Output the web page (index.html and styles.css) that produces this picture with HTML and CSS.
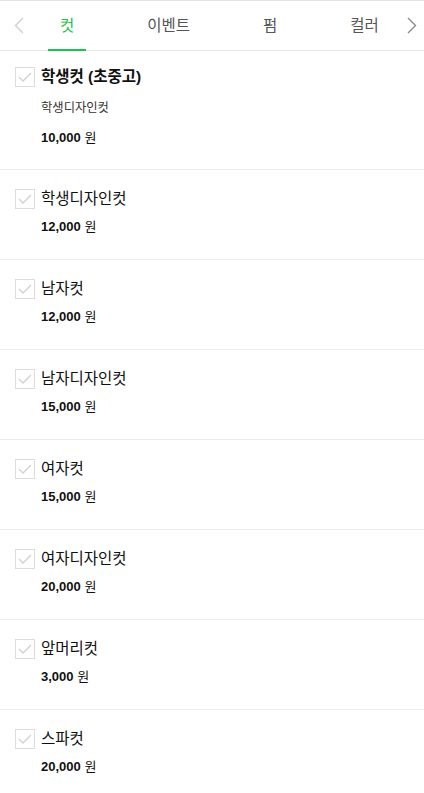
FILE: index.html
```html
<!DOCTYPE html>
<html lang="ko">
<head>
<meta charset="utf-8">
<title>메뉴</title>
<link rel="stylesheet" href="styles.css">
</head>
<body>
<nav class="tabs">
  <span class="arrow arrow-left">
    <svg width="10" height="17" viewBox="0 0 10 17"><path d="M9 1 L1.5 8.5 L9 16" fill="none" stroke="#cfcfcf" stroke-width="1.4"/></svg>
  </span>
  <ul class="tab-list">
    <li class="tab active"><span class="tab-inner">컷</span></li>
    <li class="tab"><span class="tab-inner">이벤트</span></li>
    <li class="tab"><span class="tab-inner">펌</span></li>
    <li class="tab"><span class="tab-inner">컬러</span></li>
  </ul>
  <span class="arrow arrow-right">
    <svg width="10" height="17" viewBox="0 0 10 17"><path d="M1 1 L8.5 8.5 L1 16" fill="none" stroke="#8a8a8a" stroke-width="1.4"/></svg>
  </span>
</nav>
<ul class="menu">
  <li class="item first">
    <span class="check"><svg width="14" height="10" viewBox="0 0 14 10"><path d="M1 5 L5 9 L13 1" fill="none" stroke="#d0d0d0" stroke-width="1.3"/></svg></span>
    <div class="info">
      <div class="title bold">학생컷 (초중고)</div>
      <div class="sub">학생디자인컷</div>
      <div class="price price-first"><b>10,000</b> 원</div>
    </div>
  </li>
  <li class="item">
    <span class="check"><svg width="14" height="10" viewBox="0 0 14 10"><path d="M1 5 L5 9 L13 1" fill="none" stroke="#d0d0d0" stroke-width="1.3"/></svg></span>
    <div class="info">
      <div class="title">학생디자인컷</div>
      <div class="price"><b>12,000</b> 원</div>
    </div>
  </li>
  <li class="item">
    <span class="check"><svg width="14" height="10" viewBox="0 0 14 10"><path d="M1 5 L5 9 L13 1" fill="none" stroke="#d0d0d0" stroke-width="1.3"/></svg></span>
    <div class="info">
      <div class="title">남자컷</div>
      <div class="price"><b>12,000</b> 원</div>
    </div>
  </li>
  <li class="item">
    <span class="check"><svg width="14" height="10" viewBox="0 0 14 10"><path d="M1 5 L5 9 L13 1" fill="none" stroke="#d0d0d0" stroke-width="1.3"/></svg></span>
    <div class="info">
      <div class="title">남자디자인컷</div>
      <div class="price"><b>15,000</b> 원</div>
    </div>
  </li>
  <li class="item">
    <span class="check"><svg width="14" height="10" viewBox="0 0 14 10"><path d="M1 5 L5 9 L13 1" fill="none" stroke="#d0d0d0" stroke-width="1.3"/></svg></span>
    <div class="info">
      <div class="title">여자컷</div>
      <div class="price"><b>15,000</b> 원</div>
    </div>
  </li>
  <li class="item">
    <span class="check"><svg width="14" height="10" viewBox="0 0 14 10"><path d="M1 5 L5 9 L13 1" fill="none" stroke="#d0d0d0" stroke-width="1.3"/></svg></span>
    <div class="info">
      <div class="title">여자디자인컷</div>
      <div class="price"><b>20,000</b> 원</div>
    </div>
  </li>
  <li class="item">
    <span class="check"><svg width="14" height="10" viewBox="0 0 14 10"><path d="M1 5 L5 9 L13 1" fill="none" stroke="#d0d0d0" stroke-width="1.3"/></svg></span>
    <div class="info">
      <div class="title">앞머리컷</div>
      <div class="price"><b>3,000</b> 원</div>
    </div>
  </li>
  <li class="item">
    <span class="check"><svg width="14" height="10" viewBox="0 0 14 10"><path d="M1 5 L5 9 L13 1" fill="none" stroke="#d0d0d0" stroke-width="1.3"/></svg></span>
    <div class="info">
      <div class="title">스파컷</div>
      <div class="price"><b>20,000</b> 원</div>
    </div>
  </li>
</ul>
</body>
</html>
```

FILE: styles.css
```css
* { box-sizing: border-box; }
html, body { margin: 0; padding: 0; background: #fff; }
body {
  font-family: "Liberation Sans", "Noto Sans CJK KR", sans-serif;
  color: #222;
  overflow: hidden;
}
ul { list-style: none; margin: 0; padding: 0; }

.tabs {
  display: flex;
  align-items: center;
  height: 51px;
  border-top: 1px solid #e6e6e6;
  border-bottom: 1px solid #e6e6e6;
}
.arrow { display: flex; align-items: center; flex: none; }
.arrow svg { display: block; }
.arrow-left { padding-left: 14px; }
.arrow-right { padding-right: 7px; }
.tab-list {
  flex: 1;
  min-width: 0;
  display: flex;
  height: 100%;
  gap: 49px;
  padding-left: 24px;
}
.tab {
  flex: none;
  display: flex;
  height: 100%;
}
.tab-inner {
  position: relative;
  display: flex;
  align-items: center;
  padding: 0 12px;
  font-size: 15.5px;
  color: #555;
  line-height: 20px;
}
.tab.active .tab-inner { color: #1dc24b; }
.tab.active .tab-inner::after {
  content: "";
  position: absolute;
  left: 0;
  right: 0;
  bottom: -1px;
  height: 2px;
  background: #1dc24b;
}

.item {
  display: flex;
  align-items: flex-start;
  padding: 19px 15px 22px;
  border-bottom: 1px solid #ececec;
}
.item.first { padding-top: 16px; padding-bottom: 21px; }
.check {
  flex: none;
  width: 20px;
  height: 20px;
  border: 1px solid #dcdcdc;
  display: flex;
  align-items: center;
  justify-content: center;
}
.check svg { display: block; }
.info { margin-left: 6px; }
.title {
  font-size: 15.5px;
  line-height: 20px;
  color: #111;
}
.title.bold { font-weight: bold; }
.sub {
  margin-top: 11px;
  font-size: 12.3px;
  line-height: 20px;
  color: #333;
}
.price {
  margin-top: 8px;
  font-size: 13px;
  line-height: 20px;
  color: #111;
}
.price.price-first { margin-top: 10px; }
.price b { font-weight: bold; }
```
